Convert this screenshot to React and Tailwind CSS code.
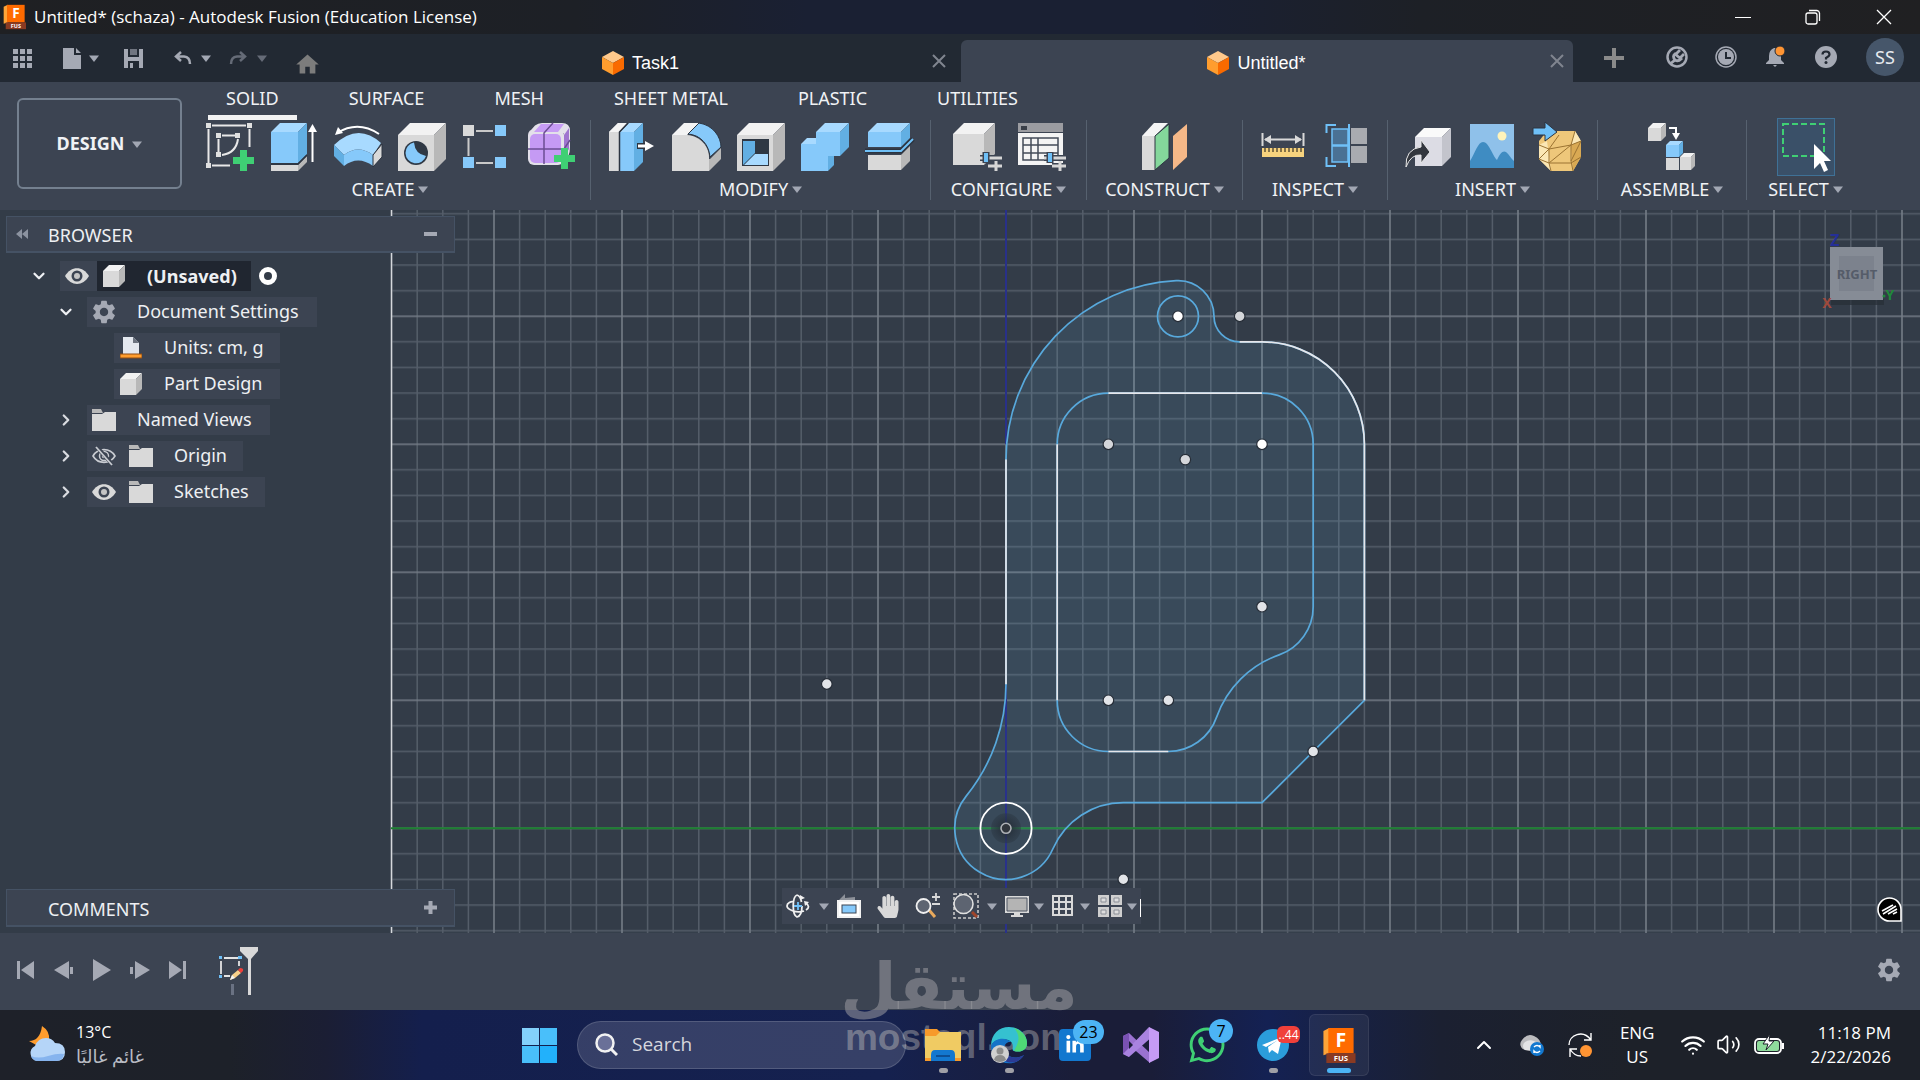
import { FaWhatsapp, FaHandPaper, FaLinkedinIn } from 'react-icons/fa';
import { MdSettings, MdHome } from 'react-icons/md';
import { Wifi, Volume2, ChevronDown, ChevronRight, ChevronUp } from 'lucide-react';

const LIGHT = { top: '#f2f2f2', front: '#d9d9d9', side: '#b8b8b8' };
const BLUE = { top: '#a8daff', front: '#86c9fa', side: '#62afe3' };

/* ---------- small shared pieces ---------- */

function Caret({ className = 'text-[#a2a7b3]' }) {
  return (
    <svg width={10} height={7} viewBox="0 0 10 7" className={className} aria-hidden="true">
      <path d="M0 0.5H10L5 7Z" fill="currentColor" />
    </svg>
  );
}

function Box({ x = 0, y = 0, w, h, d, c = LIGHT }) {
  return (
    <g>
      <path d={`M${x} ${y + d}L${x + d} ${y}H${x + w}L${x + w - d} ${y + d}Z`} fill={c.top} />
      <path d={`M${x} ${y + d}H${x + w - d}V${y + h}H${x}Z`} fill={c.front} />
      <path d={`M${x + w - d} ${y + d}L${x + w} ${y}V${y + h - d}L${x + w - d} ${y + h}Z`} fill={c.side} />
    </g>
  );
}

function Plus({ x, y }) {
  return <path d={`M${x + 7} ${y}h7v7h7v7h-7v7h-7v-7h-7v-7h7z`} fill="#3fcf74" />;
}

function Sliders() {
  return (
    <g>
      <path d="M27 35H49M35 43H49" stroke="#3c4452" strokeWidth={6} />
      <path d="M27 35H49M35 43H49M43 38V48" stroke="#d6d6d6" strokeWidth={3} />
      <path d="M33 29V40" stroke="#3c4452" strokeWidth={7} />
      <path d="M33 30V39" stroke="#6fc0f7" strokeWidth={4} />
    </g>
  );
}

function Cube({ className }) {
  return (
    <svg width={22} height={24} viewBox="0 0 22 24" className={className} aria-hidden="true">
      <path d="M11 0L22 6L11 12L0 6Z" fill="#ffc98c" />
      <path d="M0 6L11 12V24L0 18Z" fill="#ff9d2e" />
      <path d="M22 6L11 12V24L22 18Z" fill="#f96a00" />
    </svg>
  );
}

function Folder() {
  return (
    <svg width={24} height={22} viewBox="0 0 24 22" aria-hidden="true">
      <path d="M0 0H9L11 4H0Z" fill="#b9b9b9" />
      <path d="M0 5H10L13 3H24V22H0Z" fill="#d9d9d9" />
    </svg>
  );
}

function Part() {
  return (
    <svg width={22} height={22} viewBox="0 0 22 22" aria-hidden="true">
      <Box w={22} h={22} d={6} />
    </svg>
  );
}

function Eye() {
  return (
    <svg width={24} height={16} viewBox="0 0 24 16" aria-hidden="true">
      <path d="M0 8C6-2.500 18-2.500 24 8C18 18.500 6 18.500 0 8Z" fill="#d9d9d9" />
      <circle cx={12} cy={8} r={5.500} fill="#3c4452" />
      <circle cx={12} cy={8} r={3} fill="#c4c4c4" />
    </svg>
  );
}

function EyeHidden() {
  return (
    <svg width={24} height={20} viewBox="0 0 24 20" fill="none" stroke="#c9ccd2" aria-hidden="true">
      <path d="M1 10C6 1.500 18 1.500 23 10C18 18.500 6 18.500 1 10Z" strokeWidth={1.600} />
      <circle cx={12} cy={10} r={4.500} strokeWidth={1.500} />
      <circle cx={12} cy={10} r={1.500} strokeWidth={1.500} />
      <path d="M5 1L21 19" stroke="#3c4452" strokeWidth={4} />
      <path d="M4 1L20 19" strokeWidth={1.800} />
    </svg>
  );
}

/* ---------- ribbon icons, all on a 48 grid ---------- */

const ICONS = {
  sketch: (
    <g>
      <path
        d="M6 2.500H40M2.500 6V40M43.500 6V24M6 42.500H24M16 12.500H29M12.500 16V29M32 16Q30 30 16 32"
        stroke="#e8e8e8"
        strokeWidth={2}
        fill="none"
      />
      <path d="M0 0h5v5H0zM41 0h5v5h-5zM0 40h5v5H0zM10 10h5v5h-5zM29 10h5v5h-5zM10 29h5v5h-5z" fill="#e0e0e0" />
      <Plus x={27} y={27} />
    </g>
  ),
  extrude: (
    <g>
      <Box x={1} w={36} h={40} d={9} c={BLUE} />
      <path d="M1 42H28V48H1Z" fill="#d9d9d9" />
      <path d="M28 42L37 33V39L28 48Z" fill="#b8b8b8" />
      <path d="M1 41H28L37 32" stroke="#2c3440" strokeWidth={1.500} fill="none" />
      <path d="M42.500 6V39" stroke="#fff" strokeWidth={2} />
      <path d="M38 9L42.500 1L47 9Z" fill="#fff" />
    </g>
  ),
  revolve: (
    <g>
      <path d="M0 22Q24-1 47 20L39 32Q24 21 10 32Z" fill={BLUE.top} />
      <path d="M10 32Q24 21 39 32V43Q24 32 10 43Z" fill={BLUE.front} />
      <path d="M0 22L10 32V43L0 33Z" fill={BLUE.side} />
      <path d="M39 32L48 21V34L39 44Z" fill="#d9d9d9" stroke="#2c3440" />
      <path d="M3 10Q24-3 45 11" stroke="#fff" strokeWidth={2} fill="none" />
      <path d="M1 12L4 4L9 10Z" fill="#fff" />
    </g>
  ),
  hole: (
    <g>
      <Box w={48} h={48} d={12} />
      <circle cx={18} cy={30} r={12} fill="#2f3844" />
      <path d="M16 19.500A10.500 10.500 0 1 0 28 33Q17 31 16 19.500Z" fill={BLUE.front} />
    </g>
  ),
  pattern: (
    <g>
      <path d="M14 8H31M6.500 15V33M14 40H31" stroke="#c9c9c9" strokeWidth={2} />
      <path d="M1 2h11v11H1z" fill="#d9d9d9" />
      <path d="M33 2h11v11H33zM1 34h11v11H1zM33 34h11v11H33z" fill={BLUE.front} />
    </g>
  ),
  form: (
    <g>
      <rect x={2} y={6} width={36} height={36} rx={6} fill="#e3e0ea" />
      <path d="M4 10Q8 0 16 0H36Q44 0 44 8V24Q44 34 38 38V10Z" fill="#e3e0ea" />
      <path d="M8 9L15 1H38L32 9Z" fill="#c79cf5" />
      <path d="M38 12L43 5V26L38 34Z" fill="#9f74cf" />
      <rect x={4} y={11} width={31} height={29} rx={5} fill="#c59af4" />
      <path d="M18 41V10L27 0M2 26H38L44 17" stroke="#6b4d92" strokeWidth={1.500} fill="none" />
      <Plus x={28} y={25} />
    </g>
  ),
  pressPull: (
    <g>
      <path d="M0 9L9 0H18L10 9V48H0Z" fill="#d9d9d9" />
      <path d="M0 9L9 0H18L10 9Z" fill="#f4f4f4" />
      <Box x={11} w={23} h={48} d={9} c={BLUE} />
      <path d="M10.500 48V9L19 0" stroke="#2c3440" strokeWidth={1.500} fill="none" />
      <path d="M28 23H38" stroke="#2c3440" strokeWidth={6} />
      <path d="M29 23H38" stroke="#fff" strokeWidth={3} />
      <path d="M36 18L45 23L36 28Z" fill="#fff" />
    </g>
  ),
  fillet: (
    <g>
      <path d="M-1 12H14C28 13 36 24 36 34V48H-1Z" fill="#d9d9d9" />
      <path d="M-1 12L11 0H26L14 12Z" fill="#f4f4f4" />
      <path d="M37 36L48 25V36L36 48V36Z" fill="#b8b8b8" />
      <path d="M15 11L26 0C40 2 48 14 48 24L37 34C36 22 28 12 15 11Z" fill={BLUE.front} stroke="#2c3440" />
    </g>
  ),
  shell: (
    <g>
      <Box w={48} h={48} d={12} />
      <path d="M5 16H32V43H5Z" fill="#2f3844" />
      <path d="M6 18L18 18V30L6 42Z" fill={BLUE.side} />
      <path d="M7 42L18 31H31V42Z" fill={BLUE.top} />
    </g>
  ),
  combine: (
    <g>
      <Box y={15} w={33} h={33} d={6} c={BLUE} />
      <Box x={15} w={33} h={33} d={9} c={BLUE} />
      <path d="M1 22H26V47H1Z" fill={BLUE.front} />
    </g>
  ),
  split: (
    <g>
      <Box x={3} w={42} h={24} d={9} c={BLUE} />
      <path d="M0 28H36L48 16" stroke="#2c3440" strokeWidth={5} fill="none" />
      <path d="M0 28H36L48 16" stroke="#6fc0f7" strokeWidth={2} fill="none" />
      <path d="M3 32H36V47H3Z" fill="#d9d9d9" />
      <path d="M36 32L45 23V38L36 47Z" fill="#b8b8b8" />
    </g>
  ),
  configBox: (
    <g>
      <Box w={42} h={42} d={11} />
      <Sliders />
    </g>
  ),
  configTable: (
    <g>
      <path d="M1 0H46V9H1Z" fill="#9b9ca1" />
      <path d="M4 3h6v4H4z" fill="#3a3f48" />
      <path d="M1 10H46V42H1Z" fill="#f4f4f4" />
      <path d="M6 15H41V37H6ZM6 22H41M6 30H41M14 15V37M21 15V37" stroke="#434b58" strokeWidth={1.500} fill="none" />
      <Sliders />
    </g>
  ),
  plane: (
    <g>
      <path d="M1 13L13 0H27L14 13Z" fill="#f4f4f4" />
      <path d="M1 13H14V47H1Z" fill="#d9d9d9" />
      <path d="M14 13L28 1V35L14 47Z" fill="#84d79b" stroke="#2c3440" />
      <path d="M32 13L46 1V34L32 47Z" fill="#f5b888" />
    </g>
  ),
  measure: (
    <g>
      <path d="M3.500 10V23M44.500 10V23M6 16.500H42" stroke="#d9d9d9" strokeWidth={2} />
      <path d="M5 16.500L12 12V21ZM43 16.500L36 12V21Z" fill="#d9d9d9" />
      <path d="M3 25H45V34H3Z" fill="#f7d37e" />
      <path d="M6 25v4M10 25v4M14 25v4M18 25v4M22 25v4M26 25v4M30 25v4M34 25v4M38 25v4M42 25v4" stroke="#5e5236" strokeWidth={1.500} />
    </g>
  ),
  interference: (
    <g>
      <path d="M3.500 10V2H13M3.500 34V43H13M26 1V44" stroke="#6fc0f7" strokeWidth={2} fill="none" />
      <path d="M9 6H25V22H9ZM9 23H25V39H9Z" fill="#4a7194" stroke="#6fc0f7" strokeWidth={1.500} />
      <path d="M28 5H44V21H28ZM28 23H44V40H28Z" fill="#a9abb0" />
    </g>
  ),
  derive: (
    <g>
      <Box x={10} y={5} w={36} h={38} d={9} c={{ top: '#fafafa', front: '#dcdce4', side: '#c3c4cc' }} />
      <path d="M1 44Q0 26 16 24V17L25 29L16 40V32Q6 31 1 44Z" fill="#33373e" stroke="#e8e8e8" strokeWidth={1} />
    </g>
  ),
  canvas: (
    <g>
      <path d="M1 1H45V45H1Z" fill="#8fc1ea" />
      <circle cx={33} cy={13} r={4.500} fill="#fff3ba" />
      <path d="M1 38C6 30 9 19 14 19C20 19 23 32 28 37C31 30 34 27 37 29C40 31 42 36 45 38V45H1Z" fill="#3f8cc2" />
    </g>
  ),
  mesh: (
    <g>
      <path d="M14 8H42L48 18V34L40 48H18L6 36V18Z" fill="#eec77a" />
      <path d="M14 18L6 22V36L18 48ZM42 8L48 18L38 22Z" fill="#fbe7b5" />
      <path d="M38 22L48 18V34L40 48Z" fill="#d9a953" />
      <path d="M38 22L42 8M6 22L16 26L38 22L48 18M16 26V40L18 48M38 22V38L40 48M6 36L16 40H38L48 34M16 40L38 22M16 26L26 12M6 36L16 26M38 38L48 18" stroke="#9b7332" fill="none" />
      <path d="M0 5H12V-1L24 9L12 18V12H0Z" fill="#6fc0f7" stroke="#2c3440" />
    </g>
  ),
  assemble: (
    <g>
      <Box w={18} h={18} d={5} />
      <Box x={18} y={18} w={17} h={16} d={4} c={BLUE} />
      <path d="M18 35H31V47H18Z" fill="#d9d9d9" />
      <Box x={32} y={30} w={15} h={17} d={4} />
      <path d="M21 5H28V12" stroke="#fff" strokeWidth={2} fill="none" />
      <path d="M24 10H32L28 17Z" fill="#fff" />
    </g>
  ),
  select: (
    <g>
      <path d="M1 1H42V33H1Z" stroke="#3fcf74" strokeWidth={2} strokeDasharray="6 3" fill="none" />
      <path d="M32 21V46L38 40L42 49L46 47L42 38H49Z" fill="#fff" />
    </g>
  ),
};

const RIBBON_TABS = ['SOLID', 'SURFACE', 'MESH', 'SHEET METAL', 'PLASTIC', 'UTILITIES'];

const GROUPS = [
  { label: 'CREATE', width: 'w-[401px]', icons: ['sketch', 'extrude', 'revolve', 'hole', 'pattern', 'form'] },
  { label: 'MODIFY', width: 'w-[340px]', icons: ['pressPull', 'fillet', 'shell', 'combine', 'split'] },
  { label: 'CONFIGURE', width: 'w-[156px]', icons: ['configBox', 'configTable'] },
  { label: 'CONSTRUCT', width: 'w-[156px]', icons: ['plane'] },
  { label: 'INSPECT', width: 'w-[145px]', icons: ['measure', 'interference'] },
  { label: 'INSERT', width: 'w-[210px]', icons: ['derive', 'canvas', 'mesh'] },
  { label: 'ASSEMBLE', width: 'w-[149px]', icons: ['assemble'] },
  { label: 'SELECT', width: 'w-[118px]', icons: ['select'], last: true },
];

/* ---------- title bar and document tabs ---------- */

function FusionLogo({ className }) {
  return (
    <svg viewBox="0 0 34 38" className={className} aria-hidden="true">
      <path d="M1 4L7 1V27L1 29Z" fill="#ffa438" />
      <path d="M6 1H32V27H6Z" fill="#ff6b00" />
      <path d="M4 27H34V37H4Z" fill="#8a3a22" />
      <text x={19} y={21} textAnchor="middle" fontSize={20} fontWeight={700} fill="#fff" fontFamily="Open Sans, sans-serif">
        F
      </text>
      <text x={19} y={35} textAnchor="middle" fontSize={8} fontWeight={700} fill="#fff" fontFamily="Open Sans, sans-serif">
        FUS
      </text>
    </svg>
  );
}

function TitleBar() {
  return (
    <header className="flex h-[34px] shrink-0 items-center bg-[linear-gradient(90deg,#1f2023_0%,#1d2026_30%,#1a2033_42%,#1a2033_62%,#1d2026_74%,#202022_100%)] pl-[3px] font-['Open_Sans',sans-serif] text-white">
      <FusionLogo className="h-[26px] w-[23px]" />
      <h1 className="ml-2 text-[17px]">Untitled* (schaza) - Autodesk Fusion (Education License)</h1>
      <div className="ml-auto flex">
        <button aria-label="Minimize" className="flex h-[34px] w-[70px] items-center justify-center">
          <svg width={16} height={16}><path d="M0 8.500H16" stroke="#fff" /></svg>
        </button>
        <button aria-label="Restore" className="flex h-[34px] w-[70px] items-center justify-center">
          <svg width={16} height={16} fill="none" stroke="#fff" strokeWidth={1.300}>
            <rect x={1} y={4} width={11} height={11} rx={2} />
            <path d="M4 1.500H12A3 3 0 0 1 14.500 4V12" />
          </svg>
        </button>
        <button aria-label="Close" className="flex h-[34px] w-[72px] items-center justify-center">
          <svg width={16} height={16}><path d="M1 1L15 15M15 1L1 15" stroke="#fff" strokeWidth={1.300} /></svg>
        </button>
      </div>
    </header>
  );
}

function CloseX() {
  return (
    <svg width={14} height={14} viewBox="0 0 14 14" aria-hidden="true">
      <path d="M1 1L13 13M13 1L1 13" stroke="#80858f" strokeWidth={2} />
    </svg>
  );
}

function DocumentTabs() {
  return (
    <div className="flex h-12 shrink-0 bg-[#222933] font-['Liberation_Sans',Arial,sans-serif] text-lg text-white">
      <div className="flex w-[349px] shrink-0 items-start pl-[13px] pt-[14px] text-[#a5a9b4]">
        <button aria-label="Data panel">
          <svg width={20} height={20} viewBox="0 0 20 20" fill="currentColor">
            <path d="M0 1h5v5H0zM7 1h5v5H7zM14 1h5v5h-5zM0 8h5v5H0zM7 8h5v5H7zM14 8h5v5h-5zM0 15h5v5H0zM7 15h5v5H7zM14 15h5v5h-5z" />
          </svg>
        </button>
        <button aria-label="File" className="ml-[30px] flex items-center gap-2">
          <svg width={18} height={21} viewBox="0 0 18 21" fill="currentColor">
            <path d="M0 0H11V7H18V21H0ZM13 0L18 5H13Z" />
          </svg>
          <Caret />
        </button>
        <button aria-label="Save" className="ml-[25px]">
          <svg width={20} height={21} viewBox="0 0 20 21" fill="currentColor" fillRule="evenodd">
            <path d="M0 1H19V20H0ZM4 1V9H15V1ZM4 13V20H15V13ZM6 15H9V20H6Z" />
            <path d="M6 1H13V7H6Z" opacity={0.6} />
          </svg>
        </button>
        <button aria-label="Undo" className="ml-[30px] flex h-5 items-center gap-[9px]">
          <svg width={18} height={14} viewBox="0 0 18 14" fill="none" stroke="currentColor" strokeWidth={2.500}>
            <path d="M7 1L2 5.500L7 10M2 5.500H10Q16 6 16 13" />
          </svg>
          <Caret />
        </button>
        <button aria-label="Redo" className="ml-[18px] flex h-5 items-center gap-[10px] text-[#656b77]">
          <svg width={18} height={14} viewBox="0 0 18 14" fill="none" stroke="currentColor" strokeWidth={2.500}>
            <path d="M11 1L16 5.500L11 10M16 5.500H8Q2 6 2 13" />
          </svg>
          <Caret className="text-[#656b77]" />
        </button>
        <button aria-label="Home" className="ml-[27px] mt-[3px] text-[#7c7c7c]">
          <MdHome size={27} />
        </button>
      </div>

      <div className="flex min-w-0 flex-1 items-center pt-[9px]">
        <button className="flex flex-1 items-center justify-center gap-2">
          <Cube />
          Task1
        </button>
        <button aria-label="Close Task1" className="mb-1 mr-[15px]"><CloseX /></button>
      </div>
      <div className="mt-[6px] flex min-w-0 flex-1 items-center rounded-t-md bg-[#3c4452] pt-[3px]">
        <button className="flex flex-1 items-center justify-center gap-2 pl-0.5">
          <Cube />
          Untitled*
        </button>
        <button aria-label="Close Untitled" className="mb-1 mr-[9px]"><CloseX /></button>
      </div>

      <div className="flex w-[347px] shrink-0 items-center pb-[10px] pl-[31px] pt-[5px] text-[#a5a9b4]">
        <button aria-label="New design" className="mt-1">
          <svg width={20} height={20}><path d="M10 0V20M0 10H20" stroke="#8a8a8a" strokeWidth={4} /></svg>
        </button>
        <button aria-label="Extensions" className="ml-[42px] pt-0.5">
          <svg width={22} height={22} viewBox="0 0 22 22">
            <circle cx={11} cy={11} r={9.500} fill="none" stroke="currentColor" strokeWidth={2.500} />
            <path d="M4 18L9 14Q6 10 9 8L15 13Q12 16 9 14M10 8L14 4M14 12L18 8" stroke="currentColor" strokeWidth={2.800} fill="none" />
          </svg>
        </button>
        <button aria-label="Job status" className="ml-[27px] pt-0.5">
          <svg width={22} height={22} viewBox="0 0 22 22">
            <circle cx={11} cy={11} r={10} fill="none" stroke="currentColor" strokeWidth={1.500} />
            <circle cx={11} cy={11} r={8} fill="currentColor" />
            <path d="M11 6V12H16" stroke="#222933" strokeWidth={2} fill="none" />
          </svg>
        </button>
        <button aria-label="Notifications" className="ml-[28px] pt-0.5">
          <svg width={22} height={22} viewBox="0 0 22 22">
            <path d="M9 2H11Q16 4 16 10V14L19 17V18H1V17L4 14V10Q4 4 9 2ZM8 19H12L10 21Z" fill="currentColor" />
            <circle cx={15} cy={5} r={5} fill="#ff9433" stroke="#222933" />
          </svg>
        </button>
        <button aria-label="Help" className="ml-[28px] pt-0.5">
          <svg width={22} height={22} viewBox="0 0 22 22">
            <circle cx={11} cy={11} r={11} fill="currentColor" />
            <path d="M7.500 8.500Q7.500 5.500 11 5.500T14.500 8.500Q14.500 10 11 12V13.500" stroke="#222933" strokeWidth={2.200} fill="none" />
            <circle cx={11} cy={16.500} r={1.500} fill="#222933" />
          </svg>
        </button>
        <button className="ml-[29px] mt-0.5 flex size-[38px] shrink-0 items-center justify-center rounded-full bg-[#46566a] font-['Noto_Sans',sans-serif] text-lg text-[#e6e9ee]">
          SS
        </button>
      </div>
    </div>
  );
}

/* ---------- ribbon ---------- */

function Ribbon() {
  return (
    <div className="flex h-32 shrink-0 bg-[#3c4452] text-lg text-[#f0f2f5]">
      <button className="ml-[17px] mt-4 flex h-[91px] w-[165px] shrink-0 items-center justify-center gap-2 rounded-md border-2 border-[#74808f] pb-0.5 font-bold">
        DESIGN
        <Caret className="mt-1 text-[#a2a7b3]" />
      </button>
      <div className="flex flex-col pl-2">
        <nav className="flex h-[38px] gap-[34px] pl-[18px]">
          {RIBBON_TABS.map((tab, i) => (
            <button
              key={tab}
              className={`border-b-[5px] px-[18px] pb-px ${i === 0 ? 'border-[#f2f2f2]' : 'border-transparent'}`}
            >
              {tab}
            </button>
          ))}
        </nav>
        <div className="flex">
          {GROUPS.map((group) => (
            <section
              key={group.label}
              className={`flex h-20 shrink-0 flex-col items-center justify-between border-r ${group.width} ${
                group.last ? 'border-transparent' : 'border-[#56616f]'
              }`}
            >
              <div className="flex gap-4 pt-[3px]">
                {group.icons.map((name) => (
                  <button
                    key={name}
                    aria-label={name}
                    className={name === 'select' ? '-m-[5px] border border-[#3f7196] bg-[#3a5068] p-1' : ''}
                  >
                    <svg width={48} height={48} viewBox="0 0 48 48" className="overflow-visible">
                      {ICONS[name]}
                    </svg>
                  </button>
                ))}
              </div>
              <button className="flex items-center gap-1 leading-[22px]">
                {group.label}
                <Caret />
              </button>
            </section>
          ))}
        </div>
      </div>
    </div>
  );
}

/* ---------- browser tree ---------- */

function UnitsIcon() {
  return (
    <svg width={22} height={24} viewBox="0 0 22 24" aria-hidden="true">
      <path d="M3 1H13L19 7V19H3Z" fill="#e4e8ef" />
      <path d="M13 1L19 7H13Z" fill="#6d7480" />
      <path d="M0 18H22V22H0Z" fill="#ff9d2e" stroke="#8f4d12" />
    </svg>
  );
}

const TREE = [
  { label: 'Document Settings', indent: 'pl-[55px]', arrow: 'open', icons: [<MdSettings key="g" size={28} className="-m-0.5 text-[#a5a9b4]" />], pad: 'pr-[18px]' },
  { label: 'Units: cm, g', indent: 'pl-[82px]', icons: [<UnitsIcon key="u" />], pad: 'pr-4' },
  { label: 'Part Design', indent: 'pl-[82px]', icons: [<Part key="p" />], pad: 'pr-[18px]' },
  { label: 'Named Views', indent: 'pl-[55px]', arrow: 'closed', icons: [<Folder key="f" />], pad: 'pr-[18px]' },
  { label: 'Origin', indent: 'pl-[55px]', arrow: 'closed', icons: [<EyeHidden key="e" />, <Folder key="f" />], pad: 'pr-4' },
  { label: 'Sketches', indent: 'pl-[55px]', arrow: 'closed', icons: [<Eye key="e" />, <Folder key="f" />], pad: 'pr-4' },
];

function BrowserPanel() {
  return (
    <aside className="relative flex w-[455px] flex-1 flex-col pb-[6px] pl-[6px] pt-[6px] text-lg text-[#eef0f3]">
      <div className="flex h-[37px] items-center border border-b-2 border-[#455264] bg-[#3c4452] pl-[9px] pr-[17px]">
        <svg width={12} height={10} aria-hidden="true"><path d="M6 0V10L0 5ZM12 0V10L6 5Z" fill="#8c93a0" /></svg>
        <h2 className="ml-5 pt-0.5">BROWSER</h2>
        <button aria-label="Collapse browser" className="ml-auto h-1 w-[13px] bg-[#a5a9b4]" />
      </div>

      <ul className="mt-2 flex flex-col items-start gap-[6px]">
        <li className="flex h-[30px] items-center pl-[24px]">
          <button aria-label="Collapse document" className="w-[30px]"><ChevronDown size={18} strokeWidth={3} /></button>
          <span className="flex h-[30px] w-[37px] items-center bg-[#3c4452] pl-[5px]"><Eye /></span>
          <span className="flex h-[30px] items-center bg-[#202630] pl-[6px] pr-[14px] font-bold">
            <Part />
            <span className="ml-[22px]">(Unsaved)</span>
          </span>
          <span className="ml-2 size-[18px] rounded-full border-[5px] border-white" />
        </li>
        {TREE.map((row) => (
          <li key={row.label} className={`flex h-[30px] items-center ${row.indent}`}>
            {row.arrow && (
              <button aria-label={`Toggle ${row.label}`} className="-ml-[4px] w-[30px]">
                {row.arrow === 'open' ? (
                  <ChevronDown size={18} strokeWidth={3} />
                ) : (
                  <ChevronRight size={18} strokeWidth={3} className="text-[#d9dbe0]" />
                )}
              </button>
            )}
            <span
              className={`flex h-[30px] items-center gap-[13px] bg-[#3c4452] ${row.pad} ${row.arrow ? 'pl-[5px]' : 'ml-[26px] pl-[6px]'}`}
            >
              {row.icons}
              <span className={row.arrow ? 'ml-2 pb-0.5' : 'ml-[9px] pb-0.5'}>{row.label}</span>
            </span>
          </li>
        ))}
      </ul>

      <div className="mt-auto flex h-[38px] items-center border border-b-2 border-[#455264] bg-[#3c4452] pl-[41px] pr-[17px]">
        <h2 className="pt-0.5">COMMENTS</h2>
        <button aria-label="Expand comments" className="ml-auto">
          <svg width={13} height={13}><path d="M6.500 0V13M0 6.500H13" stroke="#a5a9b4" strokeWidth={4} /></svg>
        </button>
      </div>
    </aside>
  );
}

/* ---------- sketch canvas; sketch units are 5.12px, origin sits on the axes ---------- */

const STEP = 25.6;
const MAJOR = STEP * 5;

const OUTLINE =
  'M170.200 -547.700A35.800 35.800 0 0 1 208 -512A25.600 25.600 0 0 0 233.700 -486.400H256A102.400 102.400 0 0 1 358.400 -384V-128L256 -25.600H117.300A76.800 76.800 0 0 0 46.920 20.480A51.200 51.200 0 1 1 -39.820 -32.180A179.200 179.200 0 0 0 0 -144.800V-368.700A179.200 179.200 0 0 1 170.200 -547.700Z';

const POCKET =
  'M51.200 -384A51.200 51.200 0 0 1 102.400 -435.200H256A51.200 51.200 0 0 1 307.200 -384V-221.600A51.200 51.200 0 0 1 273.100 -173.400A102.400 102.400 0 0 0 210.600 -111.200A51.200 51.200 0 0 1 162.300 -76.800H102.400A51.200 51.200 0 0 1 51.200 -128Z';

const FIXED_LINES =
  'M0 -144V-368.700M233.700 -486.400H256A102.400 102.400 0 0 1 358.400 -384V-128M51.200 -128V-384M102.400 -435.200H256M102.400 -76.800H162.300';

const POINTS = [
  [172, -512, '#fff'],
  [233.7, -512, '#d4d6da'],
  [102.4, -384, '#d4d6da'],
  [256, -384, '#fff'],
  [179.3, -368.7, '#d4d6da'],
  [256, -221.6, '#e2e4e8'],
  [-179.2, -144.3, '#e2e4e8'],
  [102.4, -128, '#e2e4e8'],
  [162.3, -128, '#e2e4e8'],
  [307.2, -76.8, '#e2e4e8'],
  [117.3, 51, '#e2e4e8'],
];

const TICKS = [1, 2, 3, 4];

function SketchCanvas() {
  return (
    <svg className="absolute inset-0 size-full" aria-label="Sketch" role="img">
      <defs>
        <pattern id="grid" x={1006} y={618.3} width={MAJOR} height={MAJOR} patternUnits="userSpaceOnUse">
          {TICKS.map((t) => (
            <path key={t} d={`M${t * STEP} 0V${MAJOR}M0 ${t * STEP}H${MAJOR}`} stroke="#545d69" strokeWidth={1.5} />
          ))}
          <path d={`M0 0V${MAJOR}M0 0H${MAJOR}M${MAJOR} 0V${MAJOR}M0 ${MAJOR}H${MAJOR}`} stroke="#747c86" strokeWidth={1.6} />
        </pattern>
        <radialGradient id="originShade">
          <stop offset="0%" stopColor="#222933" />
          <stop offset="100%" stopColor="#2c3844" stopOpacity={0.5} />
        </radialGradient>
      </defs>
      <rect x={391} y={0} width="100%" height="100%" fill="url(#grid)" />
      <path d="M391.500 0V1600" stroke="#d5d8dc" strokeWidth={1.500} />
      <g transform="translate(1006 618.300)" fill="none">
        <path d="M-615 0H2400" stroke="#1c8031" strokeWidth={2} />
        <path d={OUTLINE} fill="#69c0f0" fillOpacity={0.11} />
        <path d="M0 -640V-384M0 -144V640" stroke="#232b8c" strokeWidth={1.800} />
        <g stroke="#58a9dc" strokeWidth={1.700}>
          <path d={OUTLINE} />
          <path d={POCKET} />
          <circle cx={172} cy={-512} r={20.500} />
        </g>
        <path d={FIXED_LINES} stroke="#e6e6ea" strokeWidth={1.700} />
        <circle r={15} fill="url(#originShade)" />
        <circle r={25.600} stroke="#fff" strokeWidth={1.800} />
        <circle r={5} fill="#30353c" stroke="#aeb1b6" strokeWidth={1.600} />
        {POINTS.map(([x, y, fill]) => (
          <circle key={`${x},${y}`} cx={x} cy={y} r={5.300} fill={fill} stroke="#262d37" strokeWidth={1.200} />
        ))}
      </g>
    </svg>
  );
}

function ViewCube() {
  return (
    <svg width={74} height={82} viewBox="0 0 74 82" className="absolute right-[26px] top-[19px] font-['Noto_Sans',sans-serif] font-bold">
      <path d="M11 70H64V76H11Z" fill="#272d36" opacity={0.7} />
      <rect x={10} y={18} width={53} height={53} fill="#868c96" />
      <rect x={19} y={27} width={35} height={35} fill="#7c828d" />
      <text x={37} y={50} textAnchor="middle" fontSize={13} fill="#555c69">RIGHT</text>
      <text x={15} y={17} textAnchor="middle" fontSize={16} fill="#252f98">Z</text>
      <text x={7} y={79} textAnchor="middle" fontSize={14} fill="#a04a3c">X</text>
      <text x={70} y={71} textAnchor="middle" fontSize={14} fill="#1f8a3a">Y</text>
      <circle cx={64} cy={67} r={1.500} fill="#1f8a3a" />
    </svg>
  );
}

function ViewToolbar() {
  return (
    <div className="absolute bottom-[9px] left-[782px] flex h-9 items-center bg-[#3c4452] pl-1 text-[#d9d9d9]">
      <button aria-label="Orbit" className="flex items-center gap-[9px]">
        <svg width={24} height={24} viewBox="0 0 24 24" fill="none" stroke="#f0f0f0" strokeWidth={1.800}>
          <path d="M11 1C6 3 6 21 11 23C15 22 16 16 16 12M11 1C14 2 15 5 15.500 8M18 17C10 20 1 15 1 12C1 9 5 7 8 8M20 9Q25 13 20 16" />
          <path d="M12 8V16M8 12H16" stroke="#6fc0f7" />
          <path d="M18 7L23 8L19 12ZM14 1L19 4L14 6Z" fill="#f0f0f0" stroke="none" />
        </svg>
        <Caret />
      </button>
      <button aria-label="Look at" className="ml-2">
        <svg width={24} height={24} viewBox="0 0 24 24">
          <path d="M0 8L8 0V4L18 3V8Z" fill="#8d9199" />
          <rect x={2} y={8} width={20} height={14} fill="#fff" />
          <rect x={1} y={7} width={22} height={16} fill="none" stroke="#f2f2f2" strokeWidth={2} />
          <rect x={5} y={11} width={14} height={8} fill={BLUE.front} stroke="#3c4452" />
        </svg>
      </button>
      <button aria-label="Pan" className="ml-[15px]"><FaHandPaper size={24} /></button>
      <button aria-label="Zoom" className="ml-[15px]">
        <svg width={26} height={26} viewBox="0 0 26 26">
          <path d="M14 17L20 24" stroke="#e8a95c" strokeWidth={3} />
          <circle cx={8.500} cy={13} r={7} fill="#5d6471" stroke="#f0f0f0" strokeWidth={1.800} />
          <path d="M21 0V8M17 4H25M17 11H25" stroke="#d9d9d9" strokeWidth={1.800} />
        </svg>
      </button>
      <button aria-label="Zoom window" className="ml-3 flex items-center gap-2">
        <svg width={26} height={26} viewBox="0 0 26 26">
          <rect x={1} y={1} width={24} height={24} fill="none" stroke="#c9c9c9" strokeWidth={1.600} strokeDasharray="3 2" />
          <circle cx={10.500} cy={11} r={9.500} fill="#5d6471" stroke="#e0e0e0" strokeWidth={1.600} />
          <path d="M19 19L24 24" stroke="#a0452a" strokeWidth={3} />
        </svg>
        <Caret />
      </button>
      <button aria-label="Display settings" className="ml-2 flex items-center gap-[5px]">
        <svg width={24} height={22} viewBox="0 0 24 22">
          <path d="M0 1H24V18H0Z" fill="#d9d9d9" />
          <path d="M2 3H22V16H2Z" fill="#b4b4b4" stroke="#4d5563" />
          <path d="M9 18H15V20H18V22H6V20H9Z" fill="#d9d9d9" />
        </svg>
        <Caret />
      </button>
      <button aria-label="Grid settings" className="ml-2 flex items-center gap-[6px]">
        <svg width={22} height={22} viewBox="0 0 22 22">
          <path d="M1 1H20V20H1ZM7 1V20M14 1V20M1 7H20M1 14H20" stroke="#d9d9d9" strokeWidth={2} fill="none" />
        </svg>
        <Caret />
      </button>
      <button aria-label="Viewports" className="ml-2 flex items-center gap-[5px]">
        <svg width={24} height={22} viewBox="0 0 24 22">
          <path d="M0 0h11v10H0zM13 0h11v10H13zM0 12h11v10H0zM13 12h11v10H13z" fill="#cfcfcf" />
          <path d="M3 3h5v4H3zM16 3h5v4h-5zM3 15h5v4H3zM16 15h5v4h-5z" fill="#dedede" stroke="#8b8f97" />
        </svg>
        <Caret />
      </button>
      <span className="ml-[3px] mt-1 h-[18px] w-px bg-white" />
    </div>
  );
}

function AssistantBadge() {
  return (
    <button aria-label="Assistant" className="absolute bottom-[11px] right-[18px]">
      <svg width={25} height={25} viewBox="0 0 25 25">
        <path d="M12.500 1A11.500 11.500 0 0 0 12.500 24H24V12.500A11.500 11.500 0 0 0 12.500 1Z" fill="#000" stroke="#fff" strokeWidth={1.600} />
        <path d="M5 14L16 8M6 17L19 9M11 17L20 12M16 17L20 15" stroke="#fff" strokeWidth={1.600} />
      </svg>
    </button>
  );
}

/* ---------- timeline ---------- */

const PLAYBACK = [
  { label: 'Go to start', d: 'M1 2h3v18H1zM18 2V20L5 11Z' },
  { label: 'Step back', d: 'M0 11L15 2V20ZM16 8h3v7h-3z' },
  { label: 'Play', d: 'M1 0L19 11L1 22Z' },
  { label: 'Step forward', d: 'M0 8h3v7H0zM5 2L20 11L5 20Z' },
  { label: 'Go to end', d: 'M1 2L14 11L1 20ZM15 2h3v18h-3z' },
];

function Timeline() {
  return (
    <div className="flex h-[77px] shrink-0 items-center bg-[#3c4452] pb-[3px] pl-4 pr-[17px] text-[#a5a9b4]">
      <div className="flex gap-[18px]">
        {PLAYBACK.map((b) => (
          <button key={b.label} aria-label={b.label}>
            <svg width={20} height={22} viewBox="0 0 20 22"><path d={b.d} fill="currentColor" /></svg>
          </button>
        ))}
      </div>
      <button aria-label="Sketch1" className="ml-[30px] pt-0.5">
        <svg width={44} height={50} viewBox="0 0 44 50">
          <path d="M6 12H20M3 15V28M21 15V20M6 30H12" stroke="#e4e4e4" strokeWidth={1.800} />
          <path d="M1 10h3v3H1zM20 10h4v3h-4zM1 29h3v3H1z" fill="#6fc0f7" />
          <path d="M12 34L14 29L20 24L23 27L17 32Z" fill="#f7d08a" />
          <path d="M12 34L14 29L17 32Z" fill="#f4f4f4" />
          <path d="M20 24L22 22Q26 22 25 25L23 27Z" fill="#f0403a" />
          <path d="M13 38h3v11h-3z" fill="#6a7283" />
          <path d="M22 1H40V5L33 13V49H30V13L22 5Z" fill="#d9d9d9" />
        </svg>
      </button>
      <button aria-label="Timeline settings" className="ml-auto"><MdSettings size={28} /></button>
    </div>
  );
}

/* ---------- taskbar ---------- */

function Badge({ children, className }) {
  return (
    <span className={`absolute flex items-center justify-center rounded-full ${className}`}>{children}</span>
  );
}

function TaskIcon({ label, open, active, children }) {
  return (
    <button aria-label={label} className="relative flex h-[70px] w-[66px] items-center justify-center">
      {active && <span className="absolute inset-x-[3px] inset-y-[4px] rounded-md border border-white/8 bg-white/6" />}
      <span className="relative">{children}</span>
      {open && <span className="absolute bottom-[7px] h-[5px] w-[9px] rounded-full bg-[#a0a0a6]" />}
      {active && <span className="absolute bottom-[7px] h-[5px] w-6 rounded-full bg-[#4cb4f5]" />}
    </button>
  );
}

function Watermark() {
  return (
    <svg width={240} height={120} viewBox="0 0 240 120" className="pointer-events-none absolute -top-[62px] left-[840px] overflow-visible" aria-hidden="true">
      <g fill="#9a9aa0" fillOpacity={0.55} fontWeight={700} textAnchor="middle">
        <text x={119} y={61} fontSize={65} fontFamily="DejaVu Sans, sans-serif">مستقل</text>
        <text x={119} y={102} fontSize={37} fontFamily="Liberation Sans, Arial, sans-serif">mostaql.com</text>
      </g>
    </svg>
  );
}

function Taskbar() {
  return (
    <footer className="relative flex h-[70px] shrink-0 items-center bg-[linear-gradient(90deg,#1e2129_0%,#1d2129_12%,#1b1e34_17%,#141f4d_22%,#15214f_46%,#1a1d38_56%,#1a1d38_60%,#142153_66%,#1b2031_75%,#1d2129_85%,#1d2129_100%)] font-['Open_Sans','DejaVu_Sans',sans-serif] text-[17px] text-white">
      <Watermark />
      <button className="relative ml-[28px] flex w-[494px] items-center gap-[10px] pb-0.5 text-left">
        <svg width={38} height={36} viewBox="0 0 38 36" aria-hidden="true">
          <path d="M14 0Q22 5 21 14L10 20L1 15Q12 15 14 0Z" fill="#ff9d2e" />
          <path d="M9 35A8 8 0 0 1 7 20Q10 12 18 12Q24 12 27 17Q37 17 37 26T28 35Z" fill="#b5d5f8" />
          <path d="M9 35A8 8 0 0 1 3 30Q10 33 20 30T36 28Q35 35 28 35Z" fill="#86b4ee" />
        </svg>
        <span className="flex flex-col leading-6">
          <span className="text-base leading-6">13°C</span>
          <span dir="rtl" lang="ar" className="text-lg leading-6 text-[#b9bcc4]">غائم غالبًا</span>
        </span>
      </button>
      <button aria-label="Start" className="relative">
        <svg width={35} height={35} viewBox="0 0 35 35">
          <path d="M0 0h17v17H0z" fill="#83d0fb" />
          <path d="M18 0h17v17H18zM0 18h17v17H0z" fill="#49bffa" />
          <path d="M18 18h17v17H18z" fill="#22b1fb" />
        </svg>
      </button>
      <label className="relative ml-5 flex h-12 w-[329px] items-center rounded-full border border-white/15 bg-white/14 pl-4">
        <svg width={24} height={24} viewBox="0 0 24 24" aria-hidden="true">
          <circle cx={11} cy={10} r={8.500} fill="#6a7098" stroke="#f2f2f2" strokeWidth={2.500} />
          <path d="M17 16L23 22" stroke="#f2f2f2" strokeWidth={3} />
        </svg>
        <input
          type="text"
          aria-label="Search"
          placeholder="Search"
          className="mb-0.5 ml-[14px] w-[240px] bg-transparent text-[19px] outline-none placeholder:text-[#d5d7dd]"
        />
      </label>

      <div className="ml-1 flex">
        <TaskIcon label="File Explorer" open>
          <svg width={36} height={34} viewBox="0 0 36 34">
            <path d="M0 1H12L16 5H36V33H0Z" fill="#f79a2a" />
            <path d="M0 8H11L15 4H36V30H0Z" fill="#f0cb63" />
            <path d="M6 33V27Q6 22 10 22H26Q30 22 30 27V33Z" fill="#1378cf" />
            <path d="M11 28H25" stroke="#0d4f94" strokeWidth={2} />
          </svg>
        </TaskIcon>
        <TaskIcon label="Edge" open>
          <svg width={38} height={38} viewBox="0 0 38 38">
            <path d="M1 20C1 8 9 1 19 1C30 1 37 9 37 17C37 24 31 27 24 25C21 24 24 21 22 17C19 12 5 11 1 20Z" fill="#35c1d0" />
            <path d="M24 2C33 5 37 11 37 17C37 24 31 27 24 25C26 20 33 12 24 2Z" fill="#4fd876" />
            <path d="M1 20C4 11 17 11 21 16C15 15 12 22 17 28C21 33 29 32 34 29C27 40 13 39 6 32Q1 27 1 20Z" fill="#1573c8" />
            <path d="M17 28C21 33 29 32 34 29C29 37 21 38 15 35Z" fill="#2b3b94" />
            <circle cx={10} cy={28} r={9} fill="#d0d0d0" />
            <circle cx={10} cy={25} r={3.500} fill="#8c8c8c" />
            <path d="M4 34Q5 29 10 29T16 34Q10 38 4 34Z" fill="#8c8c8c" />
          </svg>
        </TaskIcon>
        <TaskIcon label="LinkedIn">
          <span className="flex size-8 items-center justify-center rounded-sm bg-[#1378cf]"><FaLinkedinIn size={20} /></span>
          <Badge className="-right-[13px] -top-[9px] h-6 w-[31px] bg-[#4cb4f5] pb-px text-base text-black">23</Badge>
        </TaskIcon>
        <TaskIcon label="Visual Studio">
          <svg width={36} height={36} viewBox="0 0 36 36">
            <path d="M0 9L6 6L27 26V36L0 13Z" fill="#9a72d0" />
            <path d="M0 9L6 6V30L0 27Z" fill="#7a52b3" />
            <path d="M6 30L0 27L26 0L30 9Z" fill="#a983e0" />
            <path d="M26 0L36 5V31L26 36Z" fill="#c69bf6" />
            <path d="M6 14L10 18L6 22Z" fill="#1a1d38" />
          </svg>
        </TaskIcon>
        <TaskIcon label="WhatsApp">
          <FaWhatsapp size={40} className="text-[#3fcf74]" />
          <Badge className="-right-[6px] -top-[6px] size-6 bg-[#4cb4f5] pb-px text-base text-black">7</Badge>
        </TaskIcon>
        <TaskIcon label="Telegram" open>
          <svg width={32} height={32} viewBox="0 0 32 32">
            <circle cx={16} cy={16} r={16} fill="#2b9ddb" />
            <path d="M5 16L25 8L21 25L15 21L12 24L11 18L21 11L9 18Z" fill="#fff" />
          </svg>
          <Badge className="-right-[11px] -top-[3px] h-[17px] w-[23px] rounded-md bg-[#f0403a] text-xs">..44</Badge>
        </TaskIcon>
        <TaskIcon label="Fusion" active><FusionLogo className="h-[37px] w-[34px]" /></TaskIcon>
      </div>

      <div className="ml-auto flex items-center pb-px pr-[29px]">
        <button aria-label="Hidden icons"><ChevronUp size={24} strokeWidth={2} /></button>
        <svg width={26} height={24} viewBox="0 0 26 24" className="ml-[23px]" aria-label="OneDrive" role="img">
          <path d="M6 17A6 6 0 0 1 3 7Q8 0 15 3Q22 6 22 13L14 18Z" fill="#bcbcbf" />
          <path d="M6 17A5 5 0 0 1 6 9Q10 6 15 8L20 11L14 18Z" fill="#e3e3e5" />
          <circle cx={18} cy={16} r={7} fill="#1378cf" />
          <path d="M15 14Q18 11 21 14V12M21 18Q18 21 15 18V20" stroke="#fff" strokeWidth={1.400} fill="none" />
        </svg>
        <svg width={26} height={26} viewBox="0 0 26 26" fill="none" stroke="#fff" strokeWidth={1.400} className="ml-[23px]" aria-label="Updates" role="img">
          <path d="M1 13C1 3 15-3 23 8M23 1V8H16M2 25V17H9M2 17Q6 24 13 24" />
          <circle cx={18} cy={19} r={6} fill="#ff9433" stroke="none" />
        </svg>
        <button className="ml-[26px] flex flex-col items-center leading-6"><span>ENG</span><span>US</span></button>
        <button className="ml-[26px] flex items-center gap-[10px]" aria-label="Network, volume and battery">
          <Wifi size={26} strokeWidth={2} />
          <Volume2 size={25} strokeWidth={1.600} />
          <svg width={30} height={20} viewBox="0 0 30 20" className="ml-[3px]">
            <rect x={1} y={4} width={26} height={14} rx={4} fill="none" stroke="#fff" strokeWidth={1.800} />
            <rect x={3} y={6} width={22} height={10} rx={2} fill="#8fdc9c" />
            <path d="M29 8V14" stroke="#fff" strokeWidth={2} />
            <path d="M16-1L9 9H14L12 15L20 6H15Z" fill="#fff" stroke="#1d2129" strokeWidth={1} />
          </svg>
        </button>
        <button className="ml-[26px] flex flex-col items-end leading-6">
          <span>11:18 PM</span>
          <span>2/22/2026</span>
        </button>
      </div>
    </footer>
  );
}

export default function App() {
  return (
    <div className="flex h-screen flex-col overflow-hidden bg-[#333c48] font-['Noto_Sans',sans-serif]">
      <TitleBar />
      <DocumentTabs />
      <Ribbon />
      <main className="relative flex min-h-0 flex-1">
        <SketchCanvas />
        <div className="flex flex-col">
          <BrowserPanel />
        </div>
        <ViewCube />
        <ViewToolbar />
        <AssistantBadge />
      </main>
      <Timeline />
      <Taskbar />
    </div>
  );
}
